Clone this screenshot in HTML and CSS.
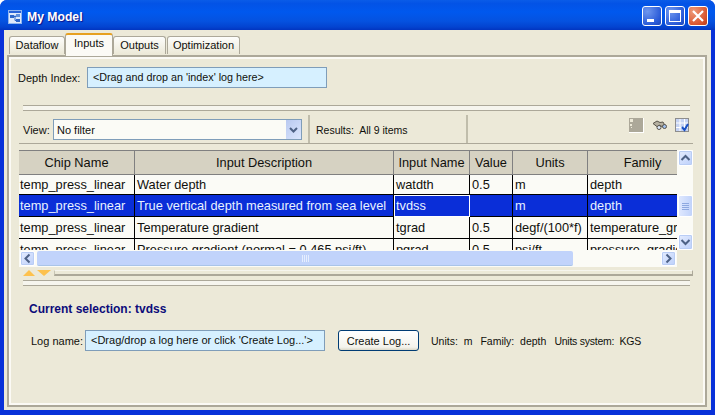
FILE: index.html
```html
<!DOCTYPE html>
<html lang="en">
<head>
    <meta charset="UTF-8">
    <title>My Model</title>
    <link rel="stylesheet" href="styles.css">
</head>
<body>
<div class="window">
    <div class="titlebar">
        <svg class="app-icon" width="14" height="14" viewBox="0 0 14 14">
            <rect x="0.5" y="0.5" width="13" height="13" fill="#dfe9fb" stroke="#8fb4ee"/>
            <rect x="1" y="1" width="12" height="2" fill="#2a63d8"/>
            <rect x="2" y="5" width="4" height="3" fill="#2f66c8"/>
            <rect x="8" y="4" width="4" height="3" fill="#5f8fdc"/>
            <rect x="8" y="9" width="4" height="3" fill="#2f66c8"/>
            <path d="M6 6.5h2M7 5.5v5h1" stroke="#2f66c8" fill="none"/>
        </svg>
        <span class="title-text">My Model</span>
        <div class="title-buttons">
            <div class="tb-btn">
                <svg width="18" height="18" viewBox="0 0 18 18"><rect x="4" y="12" width="7" height="3" fill="#fff"/></svg>
            </div>
            <div class="tb-btn">
                <svg width="18" height="18" viewBox="0 0 18 18"><rect x="3.5" y="3.5" width="11" height="11" fill="none" stroke="#fff"/><rect x="3" y="3" width="12" height="3" fill="#fff"/></svg>
            </div>
            <div class="tb-btn tb-close">
                <svg width="18" height="18" viewBox="0 0 18 18"><path d="M4 4l10 10M14 4L4 14" stroke="#fff" stroke-width="2.2" fill="none"/></svg>
            </div>
        </div>
    </div>

    <div class="client">
        <div class="tabs">
            <div class="tab tab-dataflow">Dataflow</div>
            <div class="tab tab-active">Inputs</div>
            <div class="tab tab-outputs">Outputs</div>
            <div class="tab tab-optim">Optimization</div>
        </div>

        <div class="panel">
            <div class="depth-row">
                <label class="depth-label">Depth Index:</label>
                <div class="drop-field depth-field">&lt;Drag and drop an 'index' log here&gt;</div>
            </div>

            <div class="double-rule rule-top"></div>

            <div class="toolbar">
                <span class="view-label">View:</span>
                <div class="combo">
                    <span class="combo-text">No filter</span>
                    <div class="combo-btn">
                        <svg width="15" height="19" viewBox="0 0 15 19"><path d="M4 8l3.5 3.5L11 8" stroke="#4d6185" stroke-width="2" fill="none"/></svg>
                    </div>
                </div>
                <div class="tool-sep"></div>
                <span class="results">Results:&nbsp; All 9 items</span>
                <div class="tool-sep sep-right"></div>
                <div class="tool-icons">
                    <svg width="15" height="15" viewBox="0 0 15 15">
                        <rect width="14" height="14" fill="#aca899"/>
                        <rect x="1" y="1" width="3" height="3" fill="#ece9d8"/>
                        <rect x="1" y="6" width="2" height="2" fill="#ece9d8"/>
                        <rect x="2" y="9" width="1" height="1" fill="#ece9d8"/>
                        <path d="M0 14.5h15M14.5 0v15" stroke="#fff"/>
                    </svg>
                    <svg width="15" height="15" viewBox="0 0 15 15">
                        <path d="M1 5.5L5 3l3 1.5 3-.5 2 3.5-3 1-3-1.5-1.5 2z" fill="#b5b0a0" stroke="#57534a"/>
                        <circle cx="7" cy="9.5" r="2" fill="#dce8fa" stroke="#57534a"/>
                        <circle cx="12.5" cy="8.5" r="2" fill="#9fc0ee" stroke="#57534a"/>
                    </svg>
                    <svg width="14" height="14" viewBox="0 0 14 14">
                        <rect x="0.5" y="0.5" width="13" height="13" fill="#c5d3f3" stroke="#8d8d8d"/>
                        <path d="M5 1v12M9.5 1v12M1 5h12M1 9.5h12" stroke="#fff"/>
                        <path d="M7 9l2.5 3L13 6" stroke="#1a52c4" stroke-width="2" fill="none"/>
                    </svg>
                </div>
            </div>

            <div class="grid-wrap">
                <div class="grid-row">
                    <div class="grid-view">
                        <table class="grid">
                            <colgroup>
                                <col class="c-chip"><col class="c-desc"><col class="c-name"><col class="c-value"><col class="c-units"><col class="c-family">
                            </colgroup>
                            <thead>
                                <tr>
                                    <th>Chip Name</th>
                                    <th>Input Description</th>
                                    <th>Input Name</th>
                                    <th>Value</th>
                                    <th>Units</th>
                                    <th>Family</th>
                                </tr>
                            </thead>
                            <tbody>
                                <tr class="row-first">
                                    <td>temp_press_linear</td>
                                    <td>Water depth</td>
                                    <td>watdth</td>
                                    <td>0.5</td>
                                    <td>m</td>
                                    <td>depth</td>
                                </tr>
                                <tr class="row-selected">
                                    <td>temp_press_linear</td>
                                    <td>True vertical depth measured from sea level</td>
                                    <td class="cell-focus">tvdss</td>
                                    <td></td>
                                    <td>m</td>
                                    <td>depth</td>
                                </tr>
                                <tr>
                                    <td>temp_press_linear</td>
                                    <td>Temperature gradient</td>
                                    <td>tgrad</td>
                                    <td>0.5</td>
                                    <td>degf/(100*f)</td>
                                    <td>temperature_gradient</td>
                                </tr>
                                <tr>
                                    <td>temp_press_linear</td>
                                    <td>Pressure gradient (normal = 0.465 psi/ft)</td>
                                    <td>pgrad</td>
                                    <td>0.5</td>
                                    <td>psi/ft</td>
                                    <td>pressure_gradient</td>
                                </tr>
                            </tbody>
                        </table>
                    </div>
                    <div class="vscroll">
                        <div class="sb-btn">
                            <svg width="15" height="16" viewBox="0 0 15 16"><path d="M3.5 10l4-4 4 4" stroke="#4d6185" stroke-width="2" fill="none"/></svg>
                        </div>
                        <div class="v-thumb">
                            <span class="grip"></span><span class="grip"></span><span class="grip"></span><span class="grip"></span>
                        </div>
                        <div class="sb-btn sb-bottom">
                            <svg width="15" height="16" viewBox="0 0 15 16"><path d="M3.5 6l4 4 4-4" stroke="#4d6185" stroke-width="2" fill="none"/></svg>
                        </div>
                    </div>
                </div>
                <div class="hscroll">
                    <div class="sb-btn">
                        <svg width="15" height="15" viewBox="0 0 15 15"><path d="M9.5 3.5l-4 4 4 4" stroke="#4d6185" stroke-width="2" fill="none"/></svg>
                    </div>
                    <div class="h-thumb">
                        <span class="grip-v"></span><span class="grip-v"></span><span class="grip-v"></span><span class="grip-v"></span>
                    </div>
                    <div class="sb-btn sb-right">
                        <svg width="15" height="15" viewBox="0 0 15 15"><path d="M5.5 3.5l4 4-4 4" stroke="#4d6185" stroke-width="2" fill="none"/></svg>
                    </div>
                </div>
            </div>

            <div class="sash">
                <span class="tri-up"></span>
                <span class="tri-down"></span>
                <span class="sash-bar"></span>
            </div>

            <div class="double-rule rule-bottom"></div>

            <div class="selection">Current selection: tvdss</div>

            <div class="log-row">
                <span class="log-label">Log name:</span>
                <div class="drop-field log-field">&lt;Drag/drop a log here or click 'Create Log...'&gt;</div>
                <button class="xp-btn" type="button">Create Log...</button>
                <span class="info info-units">Units:&nbsp; m</span>
                <span class="info">Family:&nbsp; depth</span>
                <span class="info info-system">Units system:&nbsp; KGS</span>
            </div>
        </div>
    </div>
</div>
</body>
</html>
```

FILE: styles.css
```css
body {
    margin: 0;
    font-family: "Liberation Sans", sans-serif;
    font-size: 11px;
    color: #10100c;
}
.window {
    width: 715px;
    height: 415px;
    background: #0831d9;
    display: flex;
    flex-direction: column;
    overflow: hidden;
    border-radius: 7px 7px 0 0;
}

/* title bar */
.titlebar {
    height: 30px;
    flex: none;
    display: flex;
    align-items: center;
    padding: 0 7px 0 8px;
    box-sizing: border-box;
    background: linear-gradient(#0a5ce8 0, #0353e6 12%, #0058ee 40%, #0552e0 70%, #0343d0 90%, #0235c0 100%);
}
.app-icon {
    margin-top: 3px;
}
.title-text {
    margin-left: 5px;
    margin-top: 4px;
    color: #fff;
    font-weight: bold;
    font-size: 12.2px;
    text-shadow: 1px 1px 1px #0f1089;
}
.title-buttons {
    margin-left: auto;
    display: flex;
    gap: 3px;
    margin-top: 2px;
}
.tb-btn {
    width: 18px;
    height: 18px;
    border: 1px solid #fff;
    border-radius: 3px;
    background: radial-gradient(circle at 25% 25%, #6f97ee, #2a5bd8 70%, #1d46b8);
    display: flex;
}
.tb-close {
    background: radial-gradient(circle at 25% 25%, #ee9a78, #d9552e 70%, #b83a18);
}

/* client area */
.client {
    margin: 0 4px 5px;
    height: 380px;
    background: #ece9d8;
    padding: 3px 3px 0;
    box-sizing: border-box;
    display: flex;
    flex-direction: column;
}

.tabs {
    display: flex;
    height: 22px;
    align-items: flex-end;
    padding-left: 2px;
    flex: none;
    position: relative;
    z-index: 1;
}
.tab {
    height: 18px;
    line-height: 17px;
    text-align: center;
    box-sizing: border-box;
    border: 1px solid #aca899;
    border-bottom: none;
    border-radius: 3px 3px 0 0;
    background: linear-gradient(#fdfdfb, #ece9d8);
    margin-bottom: 1px;
}
.tab-dataflow { width: 56px; }
.tab-outputs { width: 53px; }
.tab-optim { width: 73px; margin-left: 1px; }
.tab-active {
    width: 48px;
    height: 23px;
    line-height: 17px;
    margin-bottom: -1px;
    background: #fbfaf5;
    border-top: 2px solid #e6a020;
}

.panel {
    width: 700px;
    height: 352px;
    box-sizing: border-box;
    border: 2px solid #aca899;
    box-shadow: inset 0 0 0 2px #fbfaf5;
    padding: 8px 2px 0;
    flex: none;
    display: flex;
    flex-direction: column;
}

/* depth index */
.depth-row {
    display: flex;
    align-items: center;
    height: 21px;
    margin-top: 2px;
    padding-left: 7px;
    flex: none;
}
.depth-label {
    width: 69px;
    white-space: nowrap;
}
.drop-field {
    box-sizing: border-box;
    height: 21px;
    width: 240px;
    line-height: 19px;
    padding-left: 5px;
    background: #d6f0ff;
    border: 1px solid #7f9db9;
    white-space: nowrap;
    flex: none;
}
.depth-field {
    font-size: 10.75px;
}

.double-rule {
    height: 4px;
    border-top: 1px solid #aca899;
    border-bottom: 1px solid #aca899;
    background: #f6f5ee;
    flex: none;
}
.rule-top {
    margin: 17px 13px 0 12px;
}
.rule-bottom {
    margin: 2px 13px 0 12px;
}

/* toolbar */
.toolbar {
    display: flex;
    align-items: center;
    height: 33px;
    padding-top: 5px;
    margin: 0 10px 0 8px;
    border-bottom: 1px solid #aca899;
    box-sizing: border-box;
    flex: none;
}
.view-label {
    margin-left: 4px;
    width: 30px;
}
.combo {
    width: 249px;
    height: 21px;
    box-sizing: border-box;
    border: 1px solid #7f9db9;
    background: #fbfbf6;
    display: flex;
    align-items: center;
    justify-content: space-between;
    padding-left: 3px;
    flex: none;
}
.combo-btn {
    width: 15px;
    height: 19px;
    background: linear-gradient(135deg, #b9c9f0, #dbe6fd);
}
.tool-sep {
    width: 2px;
    height: 28px;
    background: #c0bdab;
    margin-left: 6px;
    margin-top: -2px;
    flex: none;
}
.results {
    margin-left: 6px;
    width: 150px;
    white-space: nowrap;
    font-size: 10.5px;
}
.sep-right {
    margin-left: 0;
}
.tool-icons {
    margin-left: auto;
    display: flex;
    gap: 8px;
    margin-right: 4px;
    margin-top: -8px;
}

/* grid */
.grid-wrap {
    margin: 6px 10px 0 8px;
    flex: none;
}
.grid-row {
    display: flex;
    height: 100px;
}
.grid-view {
    width: 658px;
    height: 100px;
    overflow: hidden;
    background: #fbfbf6;
    flex: none;
}
.grid {
    width: 679px;
    table-layout: fixed;
    border-collapse: separate;
    border-spacing: 0;
    font-size: 12.8px;
}
.c-chip { width: 116px; }
.c-desc { width: 259px; }
.c-name { width: 76px; }
.c-value { width: 43px; }
.c-units { width: 75px; }
.c-family { width: 110px; }

.grid th {
    height: 25px;
    box-sizing: border-box;
    padding: 0;
    background: #d6d2c2;
    font-weight: normal;
    border-top: 1px solid #808080;
    border-right: 1px solid #808080;
    border-bottom: 1px solid #808080;
    white-space: nowrap;
    overflow: hidden;
}
.grid td {
    height: 22px;
    box-sizing: border-box;
    padding: 0 0 0 2px;
    border-right: 1px solid #000;
    border-bottom: 1px solid #000;
    white-space: nowrap;
    overflow: hidden;
}
.grid td:first-child {
    padding-left: 1px;
}
.row-first td {
    height: 20px;
}
.row-selected td {
    background: #0a2ed8;
    color: #e8f2ff;
}
.grid .cell-focus {
    outline: 1px solid #fff;
    outline-offset: -1px;
}

/* scrollbars */
.vscroll {
    width: 17px;
    height: 100px;
    background: #fbfbf6;
    box-sizing: border-box;
    padding-left: 1px;
    display: flex;
    flex-direction: column;
}
.sb-btn {
    width: 15px;
    height: 16px;
    box-sizing: border-box;
    background: linear-gradient(135deg, #e4ecfe, #bdd0fb);
    border: 1px solid #fff;
    border-radius: 2px;
    box-shadow: 0 0 0 1px #b9cdf5 inset;
    display: flex;
    flex: none;
}
.sb-btn svg {
    margin: -1px;
}
.v-thumb {
    width: 15px;
    height: 22px;
    margin-top: 29px;
    box-sizing: border-box;
    border: 1px solid #fff;
    border-radius: 2px;
    background: linear-gradient(90deg, #dfe8fe, #c1d3fb);
    display: flex;
    flex-direction: column;
    align-items: center;
    justify-content: center;
    gap: 1px;
}
.grip {
    width: 7px;
    height: 1px;
    background: #8ea8e0;
}
.sb-bottom {
    margin-top: auto;
}
.hscroll {
    width: 658px;
    height: 17px;
    box-sizing: border-box;
    background: #fbfbf6;
    display: flex;
    align-items: center;
    padding: 0 1px;
}
.hscroll .sb-btn {
    height: 15px;
}
.h-thumb {
    width: 536px;
    height: 15px;
    margin-left: 2px;
    box-sizing: border-box;
    border-radius: 2px;
    border-bottom: 1px solid #a9c4e8;
    background: #c1d3fb;
    display: flex;
    align-items: center;
    justify-content: center;
    gap: 1px;
}
.grip-v {
    width: 1px;
    height: 7px;
    background: #e6eefe;
}
.sb-right {
    margin-left: auto;
}

/* sash */
.sash {
    display: flex;
    align-items: flex-start;
    height: 8px;
    margin: 3px 10px 0 12px;
    flex: none;
}
.tri-up {
    width: 0;
    height: 0;
    border-left: 6px solid transparent;
    border-right: 6px solid transparent;
    border-bottom: 6px solid #fdc14d;
}
.tri-down {
    width: 0;
    height: 0;
    border-left: 7px solid transparent;
    border-right: 7px solid transparent;
    border-top: 6px solid #fdc14d;
    margin-left: 2px;
}
.sash-bar {
    flex: 1;
    height: 6px;
    box-sizing: border-box;
    margin-left: 3px;
    border-top: 1px solid #f6f5ee;
    border-left: 1px solid #c8c5b4;
    border-right: 1px solid #aca899;
    border-bottom: 2px solid #aca899;
}

/* current selection */
.selection {
    margin: 16px 0 0 18px;
    font-size: 12px;
    font-weight: bold;
    color: #0c0c7a;
    line-height: 14px;
    flex: none;
}
.log-row {
    display: flex;
    align-items: center;
    height: 21px;
    margin-top: 14px;
    padding-left: 20px;
    flex: none;
}
.log-label {
    width: 54px;
    white-space: nowrap;
}
.xp-btn {
    width: 81px;
    height: 21px;
    margin-left: 13px;
    padding: 0;
    font: inherit;
    color: inherit;
    background: linear-gradient(#fff, #f4f3ec 85%, #dcd8c8);
    border: 1px solid #003c74;
    border-radius: 3px;
    flex: none;
}
.info {
    margin-left: 8px;
    white-space: nowrap;
    font-size: 10.5px;
}
.info-units {
    margin-left: 12px;
}
.info-system {
    letter-spacing: -0.25px;
}
```
